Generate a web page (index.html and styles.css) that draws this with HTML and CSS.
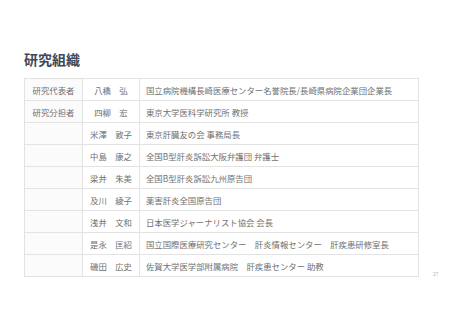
FILE: index.html
```html
<!DOCTYPE html>
<html lang="ja">

<head>
    <meta charset="UTF-8">
    <meta name="viewport" content="width=device-width, initial-scale=1.0">
    <title>研究組織</title>
    <link rel="stylesheet" href="styles.css">
</head>

<body>
    <div class="slide">
        <h1 class="title">研究組織</h1>
        <div class="body">
            <table class="org">
                <tr>
                    <td class="role">研究代表者</td>
                    <td class="name">八橋　弘</td>
                    <td class="aff">国立病院機構長崎医療センター名誉院長/長崎県病院企業団企業長</td>
                </tr>
                <tr>
                    <td class="role">研究分担者</td>
                    <td class="name">四柳　宏</td>
                    <td class="aff">東京大学医科学研究所 教授</td>
                </tr>
                <tr>
                    <td class="role"></td>
                    <td class="name">米澤　敦子</td>
                    <td class="aff">東京肝臓友の会 事務局長</td>
                </tr>
                <tr>
                    <td class="role"></td>
                    <td class="name">中島　康之</td>
                    <td class="aff">全国B型肝炎訴訟大阪弁護団 弁護士</td>
                </tr>
                <tr>
                    <td class="role"></td>
                    <td class="name">梁井　朱美</td>
                    <td class="aff">全国B型肝炎訴訟九州原告団</td>
                </tr>
                <tr>
                    <td class="role"></td>
                    <td class="name">及川　綾子</td>
                    <td class="aff">薬害肝炎全国原告団</td>
                </tr>
                <tr>
                    <td class="role"></td>
                    <td class="name">浅井　文和</td>
                    <td class="aff">日本医学ジャーナリスト協会 会長</td>
                </tr>
                <tr>
                    <td class="role"></td>
                    <td class="name">是永　匡紹</td>
                    <td class="aff">国立国際医療研究センター　肝炎情報センター　肝疾患研修室長</td>
                </tr>
                <tr>
                    <td class="role"></td>
                    <td class="name">磯田　広史</td>
                    <td class="aff">佐賀大学医学部附属病院　肝疾患センター 助教</td>
                </tr>
            </table>
            <span class="page-no">27</span>
        </div>
    </div>
</body>

</html>
```

FILE: styles.css
```css
* {
    margin: 0;
    padding: 0;
}

body {
    background-color: #fff;
    font-family: "Noto Sans CJK JP", "Noto Sans", sans-serif;
    color: #707070;
}

.slide {
    width: 453px;
    height: 320px;
    padding: 50px 0 0 24px;
    box-sizing: border-box;
}

.title {
    font-size: 14px;
    line-height: 18px;
    font-weight: bold;
    color: #3e4a59;
    margin-bottom: 10px;
}

.body {
    display: flex;
    align-items: flex-end;
}

.org {
    width: 395px;
    border-collapse: collapse;
    font-size: 8.4px;
    line-height: 12px;
}

.org td {
    height: 21px;
    border: 1px solid #e3e3e3;
    white-space: nowrap;
}

.role {
    width: 57px;
    text-align: center;
    background-color: #fbfbfb;
}

.name {
    width: 56px;
    text-align: center;
}

.aff {
    padding-left: 6px;
}

.page-no {
    margin-left: 14px;
    margin-bottom: -1px;
    font-size: 5px;
    line-height: 8px;
    color: #b5b5b5;
}
```
